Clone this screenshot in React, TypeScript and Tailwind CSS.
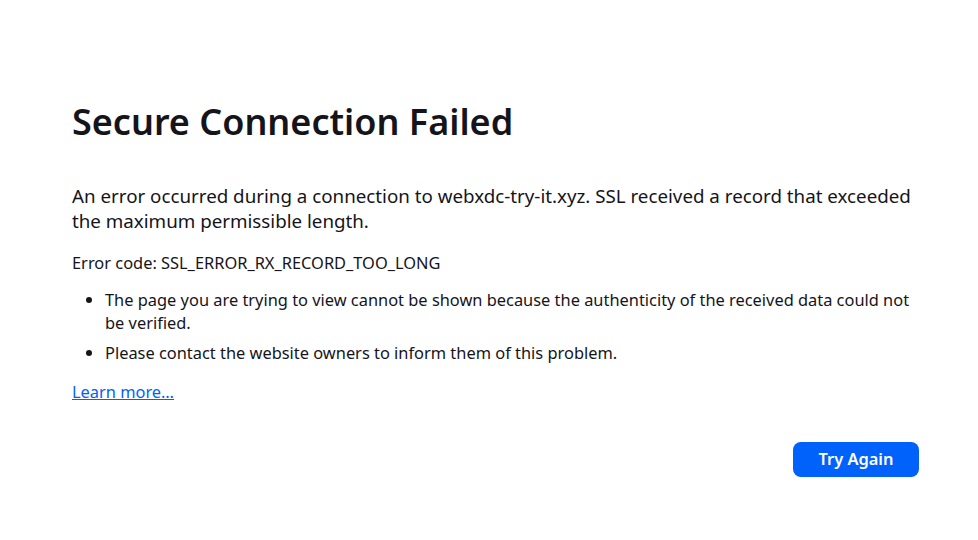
export default function App() {
  return (
    <div className="min-h-[540px] w-full bg-white text-[#15141a]" style={{ fontFamily: '"Noto Sans", sans-serif' }}>
      <div className="ml-[72px] w-[847px] pt-[100px]">
        <h1 className="text-[36px] font-semibold leading-[43px]">Secure Connection Failed</h1>
        <p className="mt-[40px] text-[18.75px] leading-[25px]">
          An error occurred during a connection to webxdc-try-it.xyz. SSL received a record that exceeded the maximum permissible length.
        </p>
        <p className="mt-[18px] text-[16.4px] leading-[23px]">Error code: SSL_ERROR_RX_RECORD_TOO_LONG</p>
        <ul className="mt-[14px] list-disc pl-[33px] text-[16.4px] leading-[23px]">
          <li>The page you are trying to view cannot be shown because the authenticity of the received data could not be verified.</li>
          <li className="mt-[7px]">Please contact the website owners to inform them of this problem.</li>
        </ul>
        <p className="mt-[16px] text-[16.4px] leading-[23px]">
          <a href="#" className="text-[#0062fa] underline">Learn more…</a>
        </p>
        <div className="mt-[39px] flex justify-end">
          <button className="h-[35px] w-[126px] rounded-[8px] bg-[#0062fa] text-[16.4px] font-semibold text-white">Try Again</button>
        </div>
      </div>
    </div>
  );
}
